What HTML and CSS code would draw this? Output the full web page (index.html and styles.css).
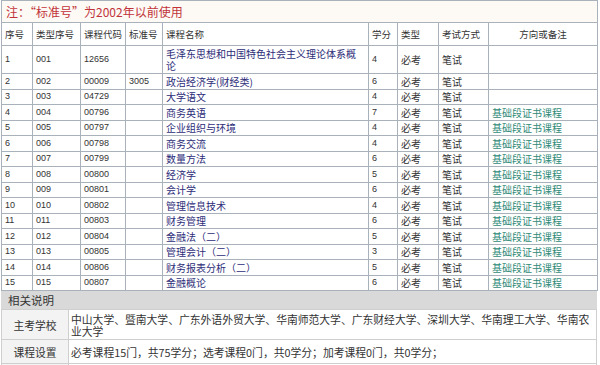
FILE: index.html
```html
<!DOCTYPE html>
<html lang="zh-CN">
<head>
<meta charset="utf-8">
<title>课程设置</title>
<link rel="stylesheet" href="styles.css">
</head>
<body>
<div class="page">
  <table class="plan">
    <colgroup>
      <col class="c1"><col class="c2"><col class="c3"><col class="c4"><col class="c5"><col class="c6"><col class="c7"><col class="c8"><col class="c9">
    </colgroup>
    <tr class="title"><td colspan="9">注：“标准号”为2002年以前使用</td></tr>
    <tr class="head">
      <td>序号</td><td>类型序号</td><td>课程代码</td><td>标准号</td><td>课程名称</td><td>学分</td><td>类型</td><td>考试方式</td><td class="center">方向或备注</td>
    </tr>
    <tr class="tall">
      <td class="n">1</td><td class="n">001</td><td class="n">12656</td><td class="n"></td><td class="name">毛泽东思想和中国特色社会主义理论体系概论</td><td class="n">4</td><td class="cn">必考</td><td class="cn">笔试</td><td class="note"></td>
    </tr>
    <tr><td class="n">2</td><td class="n">002</td><td class="n">00009</td><td class="n">3005</td><td class="name">政治经济学(财经类)</td><td class="n">6</td><td class="cn">必考</td><td class="cn">笔试</td><td class="note"></td></tr>
    <tr><td class="n">3</td><td class="n">003</td><td class="n">04729</td><td class="n"></td><td class="name">大学语文</td><td class="n">4</td><td class="cn">必考</td><td class="cn">笔试</td><td class="note"></td></tr>
    <tr><td class="n">4</td><td class="n">004</td><td class="n">00796</td><td class="n"></td><td class="name">商务英语</td><td class="n">7</td><td class="cn">必考</td><td class="cn">笔试</td><td class="note">基础段证书课程</td></tr>
    <tr><td class="n">5</td><td class="n">005</td><td class="n">00797</td><td class="n"></td><td class="name">企业组织与环境</td><td class="n">4</td><td class="cn">必考</td><td class="cn">笔试</td><td class="note">基础段证书课程</td></tr>
    <tr><td class="n">6</td><td class="n">006</td><td class="n">00798</td><td class="n"></td><td class="name">商务交流</td><td class="n">4</td><td class="cn">必考</td><td class="cn">笔试</td><td class="note">基础段证书课程</td></tr>
    <tr><td class="n">7</td><td class="n">007</td><td class="n">00799</td><td class="n"></td><td class="name">数量方法</td><td class="n">6</td><td class="cn">必考</td><td class="cn">笔试</td><td class="note">基础段证书课程</td></tr>
    <tr><td class="n">8</td><td class="n">008</td><td class="n">00800</td><td class="n"></td><td class="name">经济学</td><td class="n">5</td><td class="cn">必考</td><td class="cn">笔试</td><td class="note">基础段证书课程</td></tr>
    <tr><td class="n">9</td><td class="n">009</td><td class="n">00801</td><td class="n"></td><td class="name">会计学</td><td class="n">6</td><td class="cn">必考</td><td class="cn">笔试</td><td class="note">基础段证书课程</td></tr>
    <tr><td class="n">10</td><td class="n">010</td><td class="n">00802</td><td class="n"></td><td class="name">管理信息技术</td><td class="n">4</td><td class="cn">必考</td><td class="cn">笔试</td><td class="note">基础段证书课程</td></tr>
    <tr><td class="n">11</td><td class="n">011</td><td class="n">00803</td><td class="n"></td><td class="name">财务管理</td><td class="n">6</td><td class="cn">必考</td><td class="cn">笔试</td><td class="note">基础段证书课程</td></tr>
    <tr><td class="n">12</td><td class="n">012</td><td class="n">00804</td><td class="n"></td><td class="name">金融法（二）</td><td class="n">5</td><td class="cn">必考</td><td class="cn">笔试</td><td class="note">基础段证书课程</td></tr>
    <tr><td class="n">13</td><td class="n">013</td><td class="n">00805</td><td class="n"></td><td class="name">管理会计（二）</td><td class="n">3</td><td class="cn">必考</td><td class="cn">笔试</td><td class="note">基础段证书课程</td></tr>
    <tr><td class="n">14</td><td class="n">014</td><td class="n">00806</td><td class="n"></td><td class="name">财务报表分析（二）</td><td class="n">5</td><td class="cn">必考</td><td class="cn">笔试</td><td class="note">基础段证书课程</td></tr>
    <tr><td class="n">15</td><td class="n">015</td><td class="n">00807</td><td class="n"></td><td class="name">金融概论</td><td class="n">6</td><td class="cn">必考</td><td class="cn">笔试</td><td class="note">基础段证书课程</td></tr>
  </table>
  <div class="notes-head">相关说明</div>
  <table class="notes">
    <tr class="school"><td class="label">主考学校</td><td class="text">中山大学、暨南大学、广东外语外贸大学、华南师范大学、广东财经大学、深圳大学、华南理工大学、华南农业大学</td></tr>
    <tr class="setup"><td class="label">课程设置</td><td class="text">必考课程15门，共75学分；选考课程0门，共0学分；加考课程0门，共0学分；</td></tr>
    <tr class="more"><td class="label"></td><td class="text"></td></tr>
  </table>
</div>
</body>
</html>
```

FILE: styles.css
```css
html, body {
  margin: 0;
  padding: 0;
  background: #ffffff;
}

.page {
  padding-left: 1px;
  width: 596px;
  color: #222222;
}

.plan {
  width: 596px;
  border-collapse: collapse;
  table-layout: fixed;
}

.plan tr {
  height: 15.5px;
}

.plan td {
  border: 1px solid #a9b1ba;
  padding: 0 3px;
  line-height: 11px;
  font-size: 10px;
  font-family: "Noto Sans CJK SC", sans-serif;
  vertical-align: middle;
  white-space: nowrap;
  overflow: hidden;
}

.c1 { width: 31px; }
.c2 { width: 48px; }
.c3 { width: 45px; }
.c4 { width: 37px; }
.c5 { width: 206px; }
.c6 { width: 29px; }
.c7 { width: 41px; }
.c8 { width: 50px; }
.c9 { width: 109px; }

.plan tr.title {
  height: 22px;
}

.plan .title td {
  font-size: 12px;
  line-height: 14px;
  color: #c1343a;
  background: #fdf9f4;
  padding-left: 4px;
}

.plan tr.head {
  height: 23px;
}

.plan .head td {
  font-size: 9.5px;
  color: #333333;
}

.plan .head td.center {
  text-align: center;
}

.plan td.n {
  font-family: "Liberation Sans", sans-serif;
  font-size: 9px;
  color: #333333;
}

.plan td.name {
  color: #2c2c78;
}

.plan td.cn {
  color: #333333;
}

.plan td.note {
  color: #2f8a78;
}

.plan tr.tall {
  height: 28px;
}

.plan .tall td.name {
  white-space: normal;
  line-height: 12px;
}

.notes-head {
  height: 18px;
  line-height: 18px;
  background: #d9d9d9;
  padding-left: 7px;
  font-size: 11.5px;
  color: #333333;
  font-family: "Noto Sans CJK SC", sans-serif;
}

.notes {
  width: 596px;
  border-collapse: collapse;
  table-layout: fixed;
  font-family: "Noto Sans CJK SC", sans-serif;
}

.notes td {
  border: 1px solid #cfcfcf;
  font-size: 10.8px;
  line-height: 12px;
  color: #333333;
  vertical-align: middle;
  padding: 0 2px;
}

.notes td.label {
  width: 66px;
  text-align: center;
  background: #f3f3f3;
  padding: 0;
}

.notes tr.school {
  height: 30px;
}

.notes tr.setup {
  height: 24px;
}

.notes tr.more {
  height: 12px;
}
```
